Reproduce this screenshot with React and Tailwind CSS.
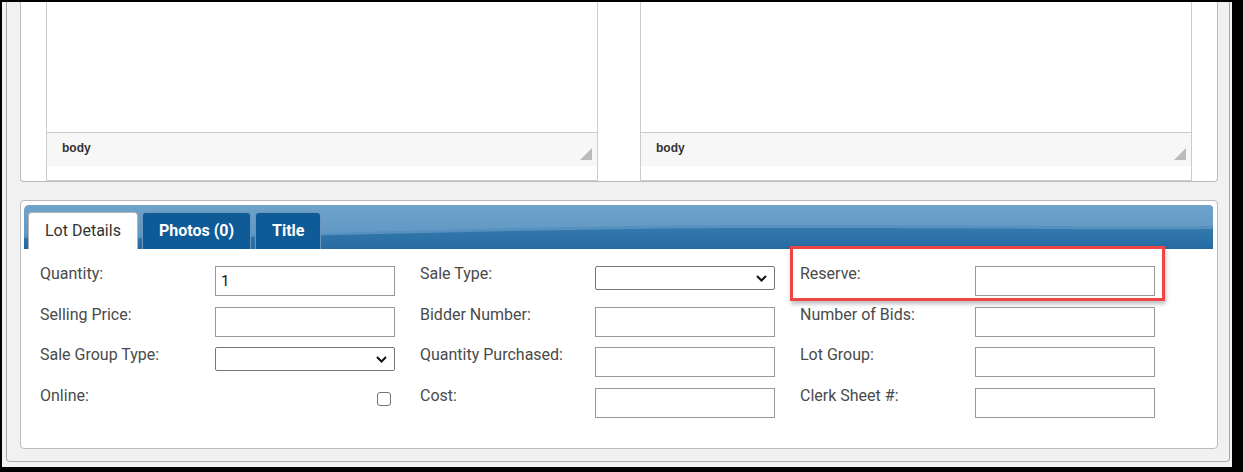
const Chevron = () => (
  <svg width="11" height="7" viewBox="0 0 11 7" className="absolute right-[7px] top-[8px]">
    <path d="M1 1 L5.5 5.5 L10 1" fill="none" stroke="#111" strokeWidth="2" />
  </svg>
);

function Control({ type, value }) {
  if (type === "select") {
    return (
      <div className="w-[180px] h-[30px]">
        <div className="relative w-[180px] h-[24px] border border-[#767676] rounded-[2px] bg-white">
          <Chevron />
        </div>
      </div>
    );
  }
  if (type === "checkbox") {
    return (
      <div className="w-[180px] h-[30px] flex justify-end items-start pt-[4px] pr-[4px]">
        <div className="w-[14px] h-[14px] border border-[#767676] rounded-[3px] bg-white" />
      </div>
    );
  }
  return (
    <div className="w-[180px] h-[30px] border border-[#999999] bg-white flex items-center pl-[5px] text-[15px] text-[#111] font-['Roboto',sans-serif]">
      {value}
    </div>
  );
}

function Column({ fields }) {
  return (
    <div className="flex flex-col gap-[10.667px]">
      {fields.map((f) => (
        <div key={f.label} className="flex items-start h-[30px]">
          <div className="w-[175px] -mt-[2px] leading-[20px] text-[16px] text-[#4a4a4a] font-['Roboto',sans-serif]">{f.label}</div>
          <Control type={f.type} value={f.value} />
        </div>
      ))}
    </div>
  );
}

function Editor() {
  return (
    <div className="w-[552px] flex flex-col border-x border-b border-[#cccccc]">
      <div className="h-[130px] bg-white" />
      <div className="relative h-[34px] border-t border-[#cccccc] bg-[#f7f7f7] flex items-center pl-[15px] pb-[3px]">
        <span className="text-[12px] font-bold text-[#333] font-['Liberation_Sans',Arial,sans-serif]">body</span>
        <svg width="12" height="12" viewBox="0 0 12 12" className="absolute right-[5px] bottom-[6px]">
          <path d="M12 0 L12 12 L0 12 Z" fill="#bbbbbb" />
        </svg>
      </div>
    </div>
  );
}

export default function App() {
  const col1 = [
    { label: "Quantity:", type: "input", value: "1" },
    { label: "Selling Price:", type: "input" },
    { label: "Sale Group Type:", type: "select" },
    { label: "Online:", type: "checkbox" },
  ];
  const col2 = [
    { label: "Sale Type:", type: "select" },
    { label: "Bidder Number:", type: "input" },
    { label: "Quantity Purchased:", type: "input" },
    { label: "Cost:", type: "input" },
  ];
  const col3 = [
    { label: "Reserve:", type: "input" },
    { label: "Number of Bids:", type: "input" },
    { label: "Lot Group:", type: "input" },
    { label: "Clerk Sheet #:", type: "input" },
  ];

  return (
    <div className="relative w-[1243px] h-[472px] bg-black pt-[2px] pl-[2px] overflow-hidden">
      <div className="w-[1230px] h-[465px] bg-[#f1f1f1]">
        <div className="ml-[4px] w-[1224px] h-[460px] border-x border-b border-[#aaaaaa] rounded-b-[4px] pl-[13px] pr-[11px] flex flex-col">
          <div className="h-[180px] bg-white border-x border-b border-[#bbbbbb] rounded-b-[4px] flex gap-[42px] pl-[25px] pr-[25px]">
            <Editor />
            <Editor />
          </div>
          <div className="mt-[18px] h-[249px] bg-white border border-[#bbbbbb] rounded-[4px] pt-[4px] px-[3px] flex flex-col">
            <div className="relative h-[44px] rounded-t-[5px] overflow-hidden">
              <svg className="absolute inset-0" width="1189" height="44" viewBox="0 0 1189 44" preserveAspectRatio="none">
                <defs>
                  <linearGradient id="lt" x1="0" y1="0" x2="0" y2="1">
                    <stop offset="0" stopColor="#6ea3cb" />
                    <stop offset="1" stopColor="#5a93c0" />
                  </linearGradient>
                  <linearGradient id="dk" x1="0" y1="0" x2="0" y2="1">
                    <stop offset="0" stopColor="#3479ad" />
                    <stop offset="1" stopColor="#256ba2" />
                  </linearGradient>
                </defs>
                <rect x="0" y="0" width="1189" height="44" fill="url(#lt)" />
                <path d="M0 31 C 250 34 450 20 750 20 S 1050 22 1189 21 L1189 44 L0 44 Z" fill="#4f8bba" opacity="0.6" />
                <path d="M0 33 C 250 36 450 23 750 23 S 1050 25 1189 24 L1189 44 L0 44 Z" fill="url(#dk)" />
              </svg>
              <div className="relative flex items-end h-full pl-[4px] gap-[4px] font-['Roboto',sans-serif] text-[16px]">
                <div className="h-[37px] px-4 flex items-center bg-white border-x border-t border-[#b5b5b5] rounded-t-[4px] text-[#333]">
                  Lot Details
                </div>
                <div className="h-[37px] px-4 flex items-center bg-[#0f5b98] border-x border-t border-[#6b95bb] rounded-t-[4px] text-white font-bold">
                  Photos (0)
                </div>
                <div className="h-[37px] px-4 flex items-center bg-[#0f5b98] border-x border-t border-[#6b95bb] rounded-t-[4px] text-white font-bold">
                  Title
                </div>
              </div>
            </div>
            <div className="pt-[17px] pl-[16px] flex gap-[25px]">
              <Column fields={col1} />
              <Column fields={col2} />
              <Column fields={col3} />
            </div>
          </div>
        </div>
      </div>
      <div className="absolute left-[790px] top-[246px] w-[375px] h-[55px] border-[3px] border-[#f04545] shadow-[1px_3px_4px_rgba(0,0,0,0.25)]" />
    </div>
  );
}
